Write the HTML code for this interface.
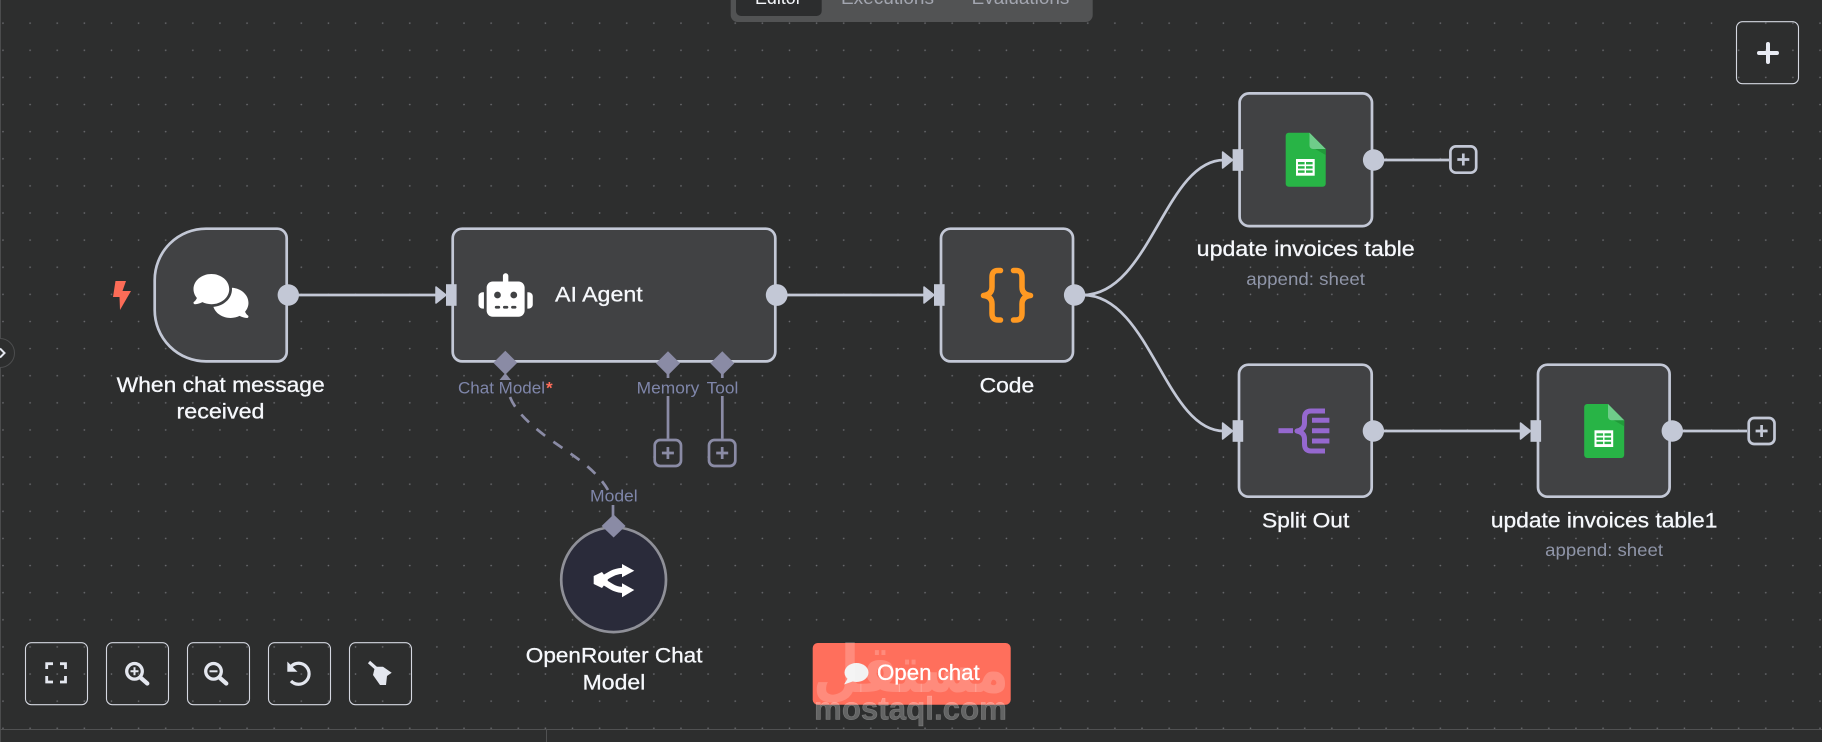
<!DOCTYPE html>
<html lang="en">
<head>
<meta charset="utf-8">
<title>Workflow editor</title>
<style>
html,body{margin:0;padding:0;background:#2d2e2e;width:1822px;height:742px;overflow:hidden}
svg{display:block;position:absolute;left:0;top:0}
text{font-family:"Liberation Sans",sans-serif}
.lb{font-size:21px;fill:#f6f8fc;stroke:#f6f8fc;stroke-width:.3px}
.sub{font-size:17.5px;fill:#8f95a8}
.con{font-size:17px;fill:#7f86aa}
.tab{font-size:18px;fill:#a3a6b0}
</style>
</head>
<body>
<svg width="1822" height="742" viewBox="0 0 1822 742" xmlns="http://www.w3.org/2000/svg">
<defs>
<pattern id="dots" x="2.5" y="-4.5" width="27.12" height="27.12" patternUnits="userSpaceOnUse">
<circle cx="0.5" cy="0.5" r="0.8" fill="#6c6d71"/>
<circle cx="27.62" cy="0.5" r="0.8" fill="#6c6d71"/>
<circle cx="0.5" cy="27.62" r="0.8" fill="#6c6d71"/>
</pattern>
<g id="in">
<polygon points="-10,-8 0,0 -10,8" fill="#c3c8d6" stroke="#c3c8d6" stroke-width="1.5" stroke-linejoin="round"/>
<rect x="0" y="-10.8" width="10.6" height="21.6" fill="#c3c8d6"/>
</g>
<g id="sheet">
<path d="M1289 132.7H1309.5L1325.7 149V183.7a3 3 0 0 1-3 3H1288.7a3 3 0 0 1-3-3V135.7a3 3 0 0 1 3-3z" fill="#28b446"/>
<polygon points="1310,146 1325.7,149 1325.7,155" fill="#219a3a"/>
<path d="M1309.5 132.7L1325.7 149H1313a3.5 3.5 0 0 1-3.5-3.5z" fill="#6fcc8a"/>
<rect x="1296" y="159" width="18.7" height="16.7" fill="#fff"/>
<g fill="#28b446">
<rect x="1298" y="162" width="6.6" height="2.4"/><rect x="1306" y="162" width="6.6" height="2.4"/>
<rect x="1298" y="166.2" width="6.6" height="2.4"/><rect x="1306" y="166.2" width="6.6" height="2.4"/>
<rect x="1298" y="170.4" width="6.6" height="2.4"/><rect x="1306" y="170.4" width="6.6" height="2.4"/>
</g>
</g>
</defs>

<rect width="1822" height="742" fill="#2d2e2e"/>
<rect width="1822" height="729" fill="url(#dots)"/>
<rect x="0" y="0" width="1" height="742" fill="#4b4c4d"/>
<rect x="0" y="729" width="1822" height="1" fill="#505152"/>
<rect x="546" y="729" width="1" height="13" fill="#505152"/>

<!-- side collapse -->
<circle cx="0" cy="353" r="14.5" fill="#2d2e2e" stroke="#4c4d4e" stroke-width="1"/>
<path d="M0 348.5L4.5 353L0 357.5" fill="none" stroke="#e4e7ef" stroke-width="2"/>

<!-- top tabs -->
<rect x="730.7" y="-12" width="362" height="34" rx="7" fill="#525354"/>
<rect x="736" y="-12" width="85.7" height="28" rx="5" fill="#2c2d2e"/>
<text class="tab" x="755" y="4" textLength="46.7" lengthAdjust="spacingAndGlyphs" style="fill:#f5f7fb">Editor</text>
<text class="tab" x="841" y="4" textLength="93" lengthAdjust="spacingAndGlyphs">Executions</text>
<text class="tab" x="971.7" y="4" textLength="97.6" lengthAdjust="spacingAndGlyphs">Evaluations</text>

<!-- top right plus -->
<rect x="1736.5" y="21.7" width="62" height="62" rx="6" fill="none" stroke="#d4d7e0" stroke-width="1.1"/>
<path d="M1768 44V62M1759 53H1777" stroke="#e8ebf3" stroke-width="4" stroke-linecap="round" fill="none"/>

<!-- connections -->
<g fill="none" stroke="#c3c8d6" stroke-width="2.7">
<path d="M296 295H437"/>
<path d="M785 295H925"/>
<path d="M1083 295C1150 295 1165 160 1224 160"/>
<path d="M1083 295C1150 295 1165 431 1224 431"/>
<path d="M1382 431H1522"/>
<path d="M1382 160H1449"/>
<path d="M1680 431H1747"/>
</g>
<g fill="none" stroke="#8a8ba5" stroke-width="2.7">
<path d="M668 372V378M668 396V438.7"/>
<path d="M722.3 372V378M722.3 396V438.7"/>
<path d="M613 505V518"/>
<path d="M510 397C515 410 528 423 548 438C572 455 595 468 608 490" stroke-dasharray="11 10"/>
</g>
<polygon points="499.5,380 511,380 505.3,373" fill="#8a8ba5"/>

<!-- trigger bolt -->
<polygon points="115.5,281 126,281 122.5,291 131,291 120,310 119.5,297 113,297" fill="#fc6c57"/>

<!-- nodes -->
<g fill="#414244" stroke="#c3c8d6" stroke-width="2.7">
<path d="M206 228.7H277.2a9.5 9.5 0 0 1 9.5 9.5V351.9a9.5 9.5 0 0 1-9.5 9.5H206a51.3 51.3 0 0 1-51.3-51.3V280a51.3 51.3 0 0 1 51.3-51.3z"/>
<rect x="452.7" y="228.7" width="322.6" height="132.7" rx="9.5"/>
<rect x="941" y="228.7" width="132" height="132.7" rx="9.5"/>
<rect x="1239.6" y="93.4" width="132.4" height="132.7" rx="9.5"/>
<rect x="1239" y="364.7" width="132.7" height="132" rx="9.5"/>
<rect x="1538" y="364.7" width="131.6" height="132" rx="9.5"/>
</g>
<circle cx="613.6" cy="579.7" r="52.4" fill="#2a2b3a" stroke="#8f9098" stroke-width="2.7"/>

<!-- ports -->
<g fill="#c3c8d6">
<circle cx="288.3" cy="295" r="10.7"/>
<circle cx="776.7" cy="295" r="10.9"/>
<circle cx="1074.6" cy="295" r="10.7"/>
<circle cx="1373.6" cy="160" r="10.7"/>
<circle cx="1373.4" cy="431" r="10.7"/>
<circle cx="1672.3" cy="431" r="10.7"/>
</g>
<use href="#in" x="446" y="295"/>
<use href="#in" x="934" y="295"/>
<use href="#in" x="1232.6" y="160"/>
<use href="#in" x="1232.6" y="431"/>
<use href="#in" x="1530.5" y="431"/>

<!-- diamonds -->
<g fill="#8a8ba5">
<polygon points="505.3,350.7 517.3,362.7 505.3,374.7 493.3,362.7"/>
<polygon points="668,351.3 680,363.3 668,375.3 656,363.3"/>
<polygon points="722.3,351.3 734.3,363.3 722.3,375.3 710.3,363.3"/>
<polygon points="613.6,514.5 625.6,526 613.6,537.5 601.6,526"/>
</g>

<!-- plus boxes -->
<g fill="none" stroke="#8a8ba5" stroke-width="2.7">
<rect x="654.7" y="440" width="26.3" height="26" rx="5.5"/>
<path d="M667.9 447V459M661.9 453H673.9"/>
<rect x="709" y="440" width="26.3" height="26" rx="5.5"/>
<path d="M722.2 447V459M716.2 453H728.2"/>
</g>
<g fill="none" stroke="#c3c8d6" stroke-width="2.7">
<rect x="1450.4" y="146.4" width="25.8" height="26.3" rx="5.5"/>
<path d="M1463.3 153.5V165.5M1457.3 159.5H1469.3"/>
<rect x="1748.7" y="418" width="25.8" height="26" rx="5.5"/>
<path d="M1761.6 425V437M1755.6 431H1767.6"/>
</g>

<!-- comments icon -->
<path transform="translate(193.5 274) scale(.0859)" fill="#fff" d="M208 352c114.9 0 208-78.8 208-176S322.9 0 208 0S0 78.8 0 176c0 38.6 14.7 74.3 39.6 103.4c-3.5 9.4-8.7 17.7-14.2 24.7c-4.8 6.2-9.7 11-13.3 14.3c-1.8 1.6-3.3 2.9-4.3 3.7c-.5 .4-.9 .7-1.1 .8l-.2 .2 0 0 0 0C1 327.2-1.4 334.4 .8 340.9S9.1 352 16 352c21.8 0 43.8-5.6 62.1-12.5c9.2-3.5 17.8-7.4 25.3-11.4C134.1 343.3 169.8 352 208 352zM448 176c0 112.3-99.1 196.9-216.5 207C255.8 457.4 336.4 512 432 512c38.2 0 73.9-8.7 104.7-23.9c7.5 4 16 7.9 25.2 11.4c18.3 6.9 40.3 12.5 62.1 12.5c6.9 0 13.1-4.5 15.2-11.1c2.1-6.6-.2-13.8-5.8-17.9l0 0 0 0-.2-.2c-.2-.2-.6-.4-1.1-.8c-1-.8-2.5-2-4.3-3.7c-3.6-3.3-8.5-8.1-13.3-14.3c-5.5-7-10.7-15.4-14.2-24.7c24.9-29 39.6-64.7 39.6-103.4c0-92.8-84.9-168.9-192.6-175.5c.4 5.1 .6 10.3 .6 15.5z"/>

<!-- robot icon -->
<path transform="translate(478.5 273.3) scale(.0848)" fill="#fff" d="M320 0c17.7 0 32 14.3 32 32V96H472c39.8 0 72 32.2 72 72V440c0 39.8-32.2 72-72 72H168c-39.8 0-72-32.2-72-72V168c0-39.8 32.2-72 72-72H288V32c0-17.7 14.3-32 32-32zM208 384c-8.8 0-16 7.2-16 16s7.2 16 16 16h32c8.8 0 16-7.2 16-16s-7.2-16-16-16H208zm96 0c-8.8 0-16 7.2-16 16s7.2 16 16 16h32c8.8 0 16-7.2 16-16s-7.2-16-16-16H304zm96 0c-8.8 0-16 7.2-16 16s7.2 16 16 16h32c8.8 0 16-7.2 16-16s-7.2-16-16-16H400zM264 256a40 40 0 1 0 -80 0 40 40 0 1 0 80 0zm152 40a40 40 0 1 0 0-80 40 40 0 1 0 0 80zM48 224H64V416H48c-26.5 0-48-21.5-48-48V272c0-26.5 21.5-48 48-48zm544 0c26.5 0 48 21.5 48 48v96c0 26.5-21.5 48-48 48H576V224h16z"/>

<!-- code braces -->
<g fill="none" stroke="#ff9922" stroke-width="5.5" stroke-linecap="round" stroke-linejoin="round">
<path d="M1000.5 270.5H998Q992 270.5 992 277V287Q992 294.5 983.5 295.5Q992 296.5 992 304V313.5Q992 320 998 320H1000.5"/>
<path d="M1013.5 270.5H1016Q1022 270.5 1022 277V287Q1022 294.5 1030.5 295.5Q1022 296.5 1022 304V313.5Q1022 320 1016 320H1013.5"/>
</g>

<!-- sheets -->
<use href="#sheet" x="0" y="0"/>
<use href="#sheet" x="298.5" y="271.3"/>

<!-- split icon -->
<g fill="none" stroke="#9568cf" stroke-width="5" stroke-linejoin="round">
<path d="M1278.5 430.7H1293"/>
<path d="M1325 411H1311Q1304.5 411 1304.5 418V423Q1304.5 429.5 1297 431Q1304.5 432.5 1304.5 439V444Q1304.5 451 1311 451H1325"/>
<path d="M1312 420.3H1329.4M1312 430.7H1329.4M1312 441H1329.4"/>
</g>

<!-- openrouter icon -->
<g fill="#fff">
<path d="M597 580C606 580 610 570.7 624 570.7M597 580C606 580 610 590 624 590" fill="none" stroke="#fff" stroke-width="6"/>
<polygon points="593.7,576 602,572 608,580 602,588 593.7,584"/>
<polygon points="622,564 634.3,570.7 622,577.2"/>
<polygon points="622,583.3 634.3,590 622,597.3"/>
</g>

<!-- labels -->
<text class="lb" x="116.7" y="392" textLength="208" lengthAdjust="spacingAndGlyphs">When chat message</text>
<text class="lb" x="176.5" y="418.7" textLength="88" lengthAdjust="spacingAndGlyphs">received</text>
<text class="lb" x="555" y="301.7" textLength="87.7" lengthAdjust="spacingAndGlyphs">AI Agent</text>
<text class="lb" x="979.6" y="392.3" textLength="54.6" lengthAdjust="spacingAndGlyphs">Code</text>
<text class="lb" x="1196.7" y="256" textLength="218" lengthAdjust="spacingAndGlyphs">update invoices table</text>
<text class="sub" x="1246.3" y="285" textLength="118.7" lengthAdjust="spacingAndGlyphs">append: sheet</text>
<text class="lb" x="1262" y="527.7" textLength="87.3" lengthAdjust="spacingAndGlyphs">Split Out</text>
<text class="lb" x="1490.9" y="527.7" textLength="226.5" lengthAdjust="spacingAndGlyphs">update invoices table1</text>
<text class="sub" x="1545.2" y="556" textLength="117.8" lengthAdjust="spacingAndGlyphs">append: sheet</text>
<text class="lb" x="525.8" y="662.7" textLength="176.7" lengthAdjust="spacingAndGlyphs">OpenRouter Chat</text>
<text class="lb" x="582.6" y="689.3" textLength="62.7" lengthAdjust="spacingAndGlyphs">Model</text>
<text class="con" x="458" y="393.3" textLength="87" lengthAdjust="spacingAndGlyphs">Chat Model</text>
<text class="con" x="546" y="393.3" style="fill:#ff6d5a;font-weight:bold">*</text>
<text class="con" x="636.7" y="393.3" textLength="62.6" lengthAdjust="spacingAndGlyphs">Memory</text>
<text class="con" x="706.7" y="393.3" textLength="31.6" lengthAdjust="spacingAndGlyphs">Tool</text>
<text class="con" x="590" y="501.7" textLength="47.7" lengthAdjust="spacingAndGlyphs">Model</text>

<!-- toolbar -->
<g fill="none" stroke="#d4d7e0" stroke-width="1.1">
<rect x="25.5" y="642.7" width="62" height="62" rx="6"/>
<rect x="106.5" y="642.7" width="62" height="62" rx="6"/>
<rect x="187.5" y="642.7" width="62" height="62" rx="6"/>
<rect x="268.5" y="642.7" width="62" height="62" rx="6"/>
<rect x="349.5" y="642.7" width="62" height="62" rx="6"/>
</g>
<g fill="none" stroke="#e4e7ef" stroke-width="2.8">
<path d="M46.7 669V663.7H53M60 663.7H65.5V669M46.7 676V682H53M60 682H65.5V676"/>
<circle cx="134.5" cy="671.3" r="7.8" stroke-width="3.3"/>
<path d="M141 678L147.3 683.5" stroke-width="4.2" stroke-linecap="round"/>
<path d="M130.5 671.3H138.5M134.5 667.3V675.3" stroke-width="2"/>
<circle cx="213.5" cy="671.3" r="7.8" stroke-width="3.3"/>
<path d="M220 678L226.3 683.5" stroke-width="4.2" stroke-linecap="round"/>
<path d="M209.5 671.3H217.5" stroke-width="2"/>
<path d="M291.5 666A10.5 10.5 0 1 1 291 681" stroke-width="3.2"/>
<path d="M369 662L378 670" stroke-width="3.2"/>
</g>
<polygon points="287.3,661.5 287.3,671.7 297.5,671.7" fill="#e4e7ef"/>
<polygon points="375,666.7 383,666.7 391.7,672.7 387,676 386,685 380,685 373,675" fill="#e4e7ef"/>

<!-- open chat -->
<rect x="812.7" y="643" width="198" height="61.7" rx="5" fill="#ff6f5c"/>
<ellipse cx="856.5" cy="672.5" rx="12" ry="9.5" fill="#f2f2f2"/>
<polygon points="848,678 844,684.5 854,681" fill="#f2f2f2"/>
<text x="877" y="680" textLength="102.7" lengthAdjust="spacingAndGlyphs" style="font-size:22px;fill:#fff;stroke:#fff;stroke-width:.3px">Open chat</text>

<!-- watermark -->
<text x="1009" y="692" textLength="196" lengthAdjust="spacingAndGlyphs" style="font-family:'DejaVu Sans',sans-serif;font-weight:bold;font-size:66px;fill:#fff;fill-opacity:.2" direction="rtl" text-anchor="start">مستقل</text>
<text x="814" y="719.3" textLength="193" lengthAdjust="spacingAndGlyphs" style="font-size:32px;font-weight:bold;fill:#fff;fill-opacity:.26;stroke:#fff;stroke-opacity:.26;stroke-width:.5px">mostaql.com</text>
</svg>
</body>
</html>
